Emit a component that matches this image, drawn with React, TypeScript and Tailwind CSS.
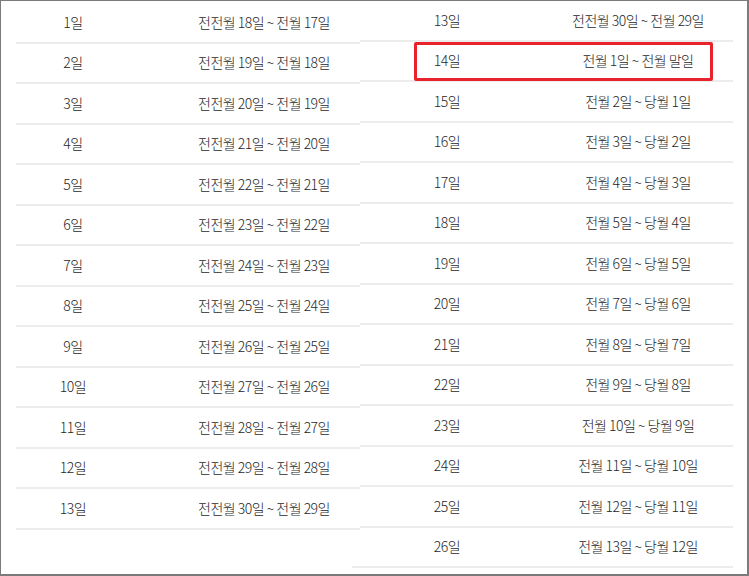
const LEFT = [
  ['1일', '전전월 18일 ~ 전월 17일'],
  ['2일', '전전월 19일 ~ 전월 18일'],
  ['3일', '전전월 20일 ~ 전월 19일'],
  ['4일', '전전월 21일 ~ 전월 20일'],
  ['5일', '전전월 22일 ~ 전월 21일'],
  ['6일', '전전월 23일 ~ 전월 22일'],
  ['7일', '전전월 24일 ~ 전월 23일'],
  ['8일', '전전월 25일 ~ 전월 24일'],
  ['9일', '전전월 26일 ~ 전월 25일'],
  ['10일', '전전월 27일 ~ 전월 26일'],
  ['11일', '전전월 28일 ~ 전월 27일'],
  ['12일', '전전월 29일 ~ 전월 28일'],
  ['13일', '전전월 30일 ~ 전월 29일'],
]

const RIGHT = [
  ['13일', '전전월 30일 ~ 전월 29일'],
  ['14일', '전월 1일 ~ 전월 말일'],
  ['15일', '전월 2일 ~ 당월 1일'],
  ['16일', '전월 3일 ~ 당월 2일'],
  ['17일', '전월 4일 ~ 당월 3일'],
  ['18일', '전월 5일 ~ 당월 4일'],
  ['19일', '전월 6일 ~ 당월 5일'],
  ['20일', '전월 7일 ~ 당월 6일'],
  ['21일', '전월 8일 ~ 당월 7일'],
  ['22일', '전월 9일 ~ 당월 8일'],
  ['23일', '전월 10일 ~ 당월 9일'],
  ['24일', '전월 11일 ~ 당월 10일'],
  ['25일', '전월 12일 ~ 당월 11일'],
  ['26일', '전월 13일 ~ 당월 12일'],
]

export default function App() {
  return (
    <div
      className="w-[749px] h-[576px] bg-white border-t border-l border-r-2 border-b-2 border-[#7b7b7b] flex items-start text-[14px] font-light text-[#1f1f1f] tracking-[-0.5px] overflow-hidden"
      style={{ fontFamily: '"Noto Sans CJK KR", "Noto Sans", sans-serif' }}
    >
      {/* left table */}
      <div className="relative z-10 ml-[15px] mt-[2px] w-[344px] bg-white">
        {LEFT.map(([day, range]) => (
          <div key={day} className="flex items-center h-[40.5px] border-b-2 border-[#ececec]">
            <div className="w-[114px] text-center">{day}</div>
            <div className="flex-1 pl-[38px] text-center">{range}</div>
          </div>
        ))}
      </div>

      {/* right table */}
      <div className="ml-[-8px] w-[381px]">
        {RIGHT.map(([day, range]) => (
          <div key={day} className="relative flex items-center h-[40.5px] border-b-2 border-[#ececec]">
            <div className="w-[190px] text-center">{day}</div>
            <div className="flex-1 pl-[1px] text-center">{range}</div>
            {day === '14일' && (
              <div className="absolute left-[62px] top-[0.5px] w-[299px] h-[39px] border-[3px] border-[#e8232b] rounded-[2px]" />
            )}
          </div>
        ))}
      </div>
    </div>
  )
}
